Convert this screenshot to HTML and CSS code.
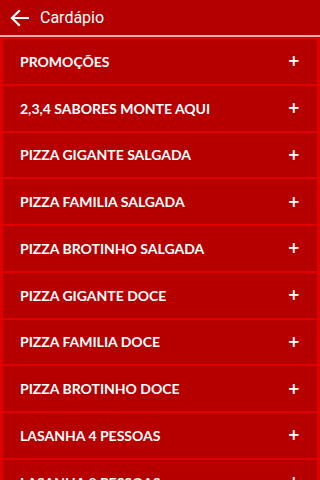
FILE: index.html
```html
<!DOCTYPE html>
<html lang="pt">
  <head>
    <meta charset="UTF-8" />
    <meta name="viewport" content="width=device-width, initial-scale=1.0" />
    <title>Cardápio</title>
    <link rel="stylesheet" href="styles.css">
  </head>
  <body>
    <header class="topbar">
      <svg class="back" width="20" height="18" viewBox="0 0 20 18">
        <path d="M19 9H3M10 2L3 9l7 7" fill="none" stroke="#fff" stroke-width="2.2" stroke-linecap="square" />
      </svg>
      <span class="topbar-title">Cardápio</span>
    </header>
    <ul class="menu">
      <li><span>PROMOÇÕES</span><b>+</b></li>
      <li><span>2,3,4 SABORES MONTE AQUI</span><b>+</b></li>
      <li><span>PIZZA GIGANTE SALGADA</span><b>+</b></li>
      <li><span>PIZZA FAMILIA SALGADA</span><b>+</b></li>
      <li><span>PIZZA BROTINHO SALGADA</span><b>+</b></li>
      <li><span>PIZZA GIGANTE DOCE</span><b>+</b></li>
      <li><span>PIZZA FAMILIA DOCE</span><b>+</b></li>
      <li><span>PIZZA BROTINHO DOCE</span><b>+</b></li>
      <li><span>LASANHA 4 PESSOAS</span><b>+</b></li>
      <li><span>LASANHA 8 PESSOAS</span><b>+</b></li>
    </ul>
  </body>
</html>
```
FILE: styles.css
```css
* {
  margin: 0;
  padding: 0;
  box-sizing: border-box;
}

body {
  background: #b40000;
  height: 480px;
  overflow: hidden;
}

.topbar {
  height: 37px;
  display: flex;
  align-items: center;
  padding-left: 9px;
  background: #b40000;
  border-bottom: 2px solid #e4b4b4;
}

.back {
  display: block;
}

.topbar-title {
  margin-left: 11px;
  color: #fff;
  font-family: Roboto, sans-serif;
  font-size: 16px;
}

.menu {
  list-style: none;
  border-top: 2px solid #e10000;
}

.menu li {
  height: 46.75px;
  display: flex;
  align-items: center;
  justify-content: space-between;
  padding: 0 17px 0 17px;
  background: #b60000;
  border-left: 3px solid #e10000;
  border-right: 3px solid #e10000;
  border-bottom: 2px solid #e10000;
  color: #fff;
  font-family: Lato, sans-serif;
  font-weight: 700;
  font-size: 14px;
}

.menu li b {
  font-family: "DejaVu Sans", sans-serif;
  font-size: 15px;
  font-weight: 700;
}
```
